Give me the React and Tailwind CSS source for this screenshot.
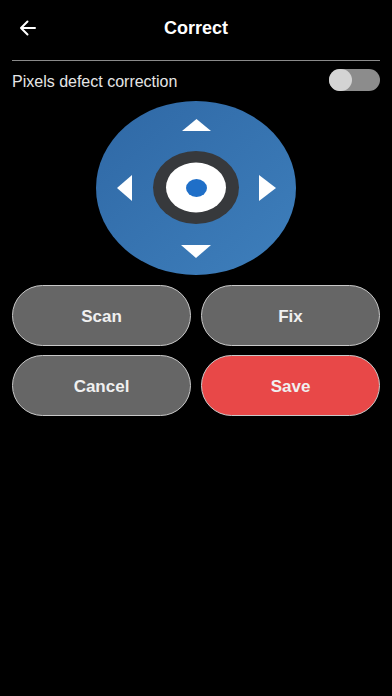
export default function App() {
  const font = { fontFamily: "'Liberation Sans', Arial, sans-serif" };
  return (
    <div className="w-[392px] h-[696px] bg-black text-white overflow-hidden" style={font}>
      <div className="h-[56px] flex items-center px-[18px]">
        <svg width="20" height="20" viewBox="0 0 20 20" className="shrink-0">
          <path d="M17 10H3.5M9.5 3.5L3 10l6.5 6.5" stroke="white" strokeWidth="2" fill="none" strokeLinecap="round" strokeLinejoin="round" />
        </svg>
        <div className="flex-1 text-center text-[18px] font-bold pr-[20px]">Correct</div>
      </div>
      <div className="mt-[4px] mx-3 h-px bg-[#8a8a8a]" />
      <div className="h-[38px] flex items-center justify-between pl-3 pr-3">
        <span className="text-[16px] text-[#e6e6e6] pt-[3px]">Pixels defect correction</span>
        <div className="w-[51px] h-[22px] rounded-full bg-[#8c8c8c] flex items-center">
          <div className="w-[23px] h-[22px] rounded-full bg-[#d4d4d4]" />
        </div>
      </div>
      <div className="mt-[2px] mx-auto w-[200px] h-[174px]">
        <svg width="200" height="174" viewBox="0 0 200 174">
          <defs>
            <linearGradient id="g" x1="0" y1="0" x2="1" y2="1">
              <stop offset="0" stopColor="#2f68a5" />
              <stop offset="1" stopColor="#3e7fbc" />
            </linearGradient>
          </defs>
          <ellipse cx="100" cy="87" rx="100" ry="87" fill="url(#g)" />
          <ellipse cx="100" cy="86.5" rx="43" ry="36.5" fill="#37393c" />
          <ellipse cx="100" cy="86.5" rx="30" ry="25" fill="#ffffff" />
          <ellipse cx="100.5" cy="87" rx="10.5" ry="9" fill="#1f6fc8" />
          <polygon points="86,30 115,30 100.5,18" fill="#ffffff" />
          <polygon points="85,144 115,144 100,157" fill="#ffffff" />
          <polygon points="36,74 36,100 21,87" fill="#ffffff" />
          <polygon points="163,74 163,100 180,87" fill="#ffffff" />
        </svg>
      </div>
      <div className="mt-[10px] px-3 grid grid-cols-2 gap-x-[10px] gap-y-[9px]">
        <button className="h-[61px] pt-[2px] rounded-full bg-[#666666] border border-[#c8c8c8] text-[17px] font-bold text-[#f0f0f0]">Scan</button>
        <button className="h-[61px] pt-[2px] rounded-full bg-[#666666] border border-[#c8c8c8] text-[17px] font-bold text-[#f0f0f0]">Fix</button>
        <button className="h-[61px] pt-[2px] rounded-full bg-[#666666] border border-[#c8c8c8] text-[17px] font-bold text-[#f0f0f0]">Cancel</button>
        <button className="h-[61px] pt-[2px] rounded-full bg-[#e84848] border border-[#c8c8c8] text-[17px] font-bold text-[#f0f0f0]">Save</button>
      </div>
    </div>
  );
}
